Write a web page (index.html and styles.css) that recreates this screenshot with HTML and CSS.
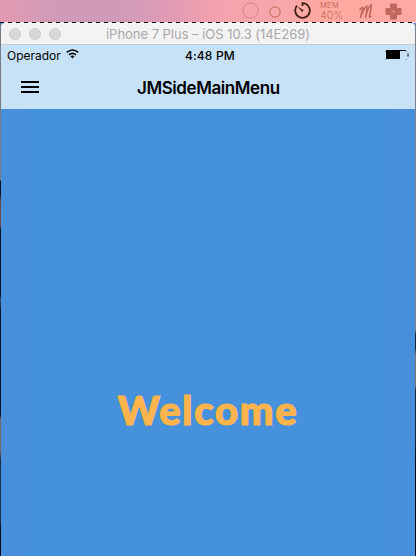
FILE: index.html
```html
<!DOCTYPE html>
<html lang="es">
<head>
<meta charset="utf-8">
<title>JMSideMainMenu</title>
<link rel="stylesheet" href="styles.css">
</head>
<body>
<div class="desktop">
  <div class="menubar">
    <svg class="ring-large" width="17" height="17" viewBox="0 0 17 17"><circle cx="8.5" cy="8.5" r="7.6"/></svg>
    <svg class="ring-small" width="12" height="12" viewBox="0 0 12 12"><circle cx="6" cy="6" r="5.2"/></svg>
    <svg class="timer" width="17" height="17" viewBox="0 0 17 17"><path d="M8.5 4V1.2A7.3 7.3 0 1 1 3 3.7"/><path class="hand" d="M3.8 4.7 9.7 8.2 8.1 10Z"/></svg>
    <div class="memory"><span class="memory-label">MEM</span><span class="memory-value">40%</span></div>
    <svg class="scribble" width="15" height="17" viewBox="0 0 15 17"><path d="M2 6.500Q5 3 5 5L2.500 14.500Q6 5 8.800 3Q9.500 5 7.500 14.500Q10 4 13.300 1.500Q13.500 5 11.300 14L13 13.500"/></svg>
    <svg class="cross" width="17" height="17" viewBox="0 0 17 17"><path d="M5.5 1h6v4.5H16v6h-4.500V16h-6v-4.500H1v-6h4.500Z"/><path class="cross-mark" d="M6.500 8.500h4M8.500 6.500v4"/></svg>
  </div>
  <div class="selection"></div>
  <div class="window">
    <header class="titlebar">
      <div class="lights"><i></i><i></i><i></i></div>
      <span class="window-title">iPhone 7 Plus – iOS 10.3 (14E269)</span>
    </header>
    <div class="statusbar">
      <div class="carrier">
        <span class="carrier-name">Operador</span>
        <svg width="13" height="10" viewBox="0 0 13 10"><path d="M.8 3.400Q6.500-1.300 12.200 3.400M3 5.800Q6.500 2.900 10 5.800"/><path class="wifi-dot" d="M4.500 7.300Q6.500 5.900 8.500 7.300L6.500 9.500Z"/></svg>
      </div>
      <span class="clock">4:48 PM</span>
      <svg class="battery" width="24" height="10" viewBox="0 0 24 10"><path d="M1 0h20v1H15v8H1Z"/><path d="M22.500 3.500h1v3h-1Z"/><path class="corner" d="M0 1h1v1H0ZM0 9h1v1H0ZM21 1h1v1h-1ZM21 9h1v1h-1Z"/></svg>
    </div>
    <nav class="navbar">
      <div class="menu-button"><i></i><i></i><i></i></div>
      <h1 class="nav-title">JMSideMainMenu</h1>
    </nav>
    <main class="content"><p class="welcome">Welcome</p></main>
  </div>
</div>
</body>
</html>
```
FILE: styles.css
```css
* { box-sizing: border-box; }
body { margin: 0; font-family: Inter, "Liberation Sans", sans-serif; color: #000; }
svg { display: block; flex: none; fill: none; }
.desktop {
  width: 416px; height: 556px; overflow: hidden;
  background:
    linear-gradient(#777b84 0 180px, #07162f 181px 194px, #714f4d 202px 225px, #07162f 230px 295px, #294b6a 300px, #08172f 310px 415px, #796761 420px 450px, #17304d 460px 520px, #030b1d 530px) left / 1px 100% no-repeat,
    linear-gradient(#79808c 0 330px, #12203a 335px 348px, #83706e 355px 385px, #172b45 390px 435px, #030a19 460px) right / 1px 100% no-repeat,
    #4690dc;
}
.menubar {
  height: 22px; display: flex; align-items: flex-start; padding: 2px 0 0 242px;
  background: linear-gradient(90deg, #e19ab1 0, #cf9bb8 15%, #d19bb8 30%, #e29bb3 42%, #f4a2ad 52%, #f7a5ae 65%, #ffaa9f 78%, #ffa9a5 100%);
}
.ring-large { stroke: #d87f83; }
.ring-small { stroke: #c77468; margin: 4px 0 0 10px; stroke-width: 1.2; }
.timer { stroke: #431e18; stroke-width: 1.8; margin-left: 13px; }
.timer .hand { fill: #431e18; stroke: none; }
.memory { width: 26px; margin-left: 9px; color: #c56d63; display: flex; flex-direction: column; }
.memory-label { font-size: 7.5px; line-height: 8px; letter-spacing: .3px; }
.memory-value { font-size: 10.5px; line-height: 12px; font-weight: 300; letter-spacing: .1px; }
.scribble { margin: 1px 0 0 12px; stroke: #c1665e; stroke-width: 1.5; stroke-linecap: round; stroke-linejoin: round; }
.cross { margin: 1px 0 0 12px; fill: #c1665e; stroke: #c1665e; stroke-linejoin: round; }
.cross .cross-mark { stroke: #e58b80; }
.selection { height: 1px; background: repeating-linear-gradient(90deg, #000 0 4px, #f8e9e8 4px 8px); }
.window { margin: 0 1px; height: 533px; border-radius: 4px 4px 0 0; overflow: hidden; display: flex; flex-direction: column; }
.titlebar { height: 22px; display: grid; grid-template-columns: 105px 1fr; align-items: center; background: #f4f3f4; border-bottom: 1px solid #c3cbd1; }
.lights { display: flex; gap: 8px; padding-left: 8px; }
.lights i { width: 12px; height: 12px; border-radius: 50%; background: #dad7d8; border: 1px solid #cecbcc; }
.window-title { font-size: 13px; line-height: 18px; color: #aaa8a9; white-space: nowrap; letter-spacing: -.03px; padding-top: 1px; }
.statusbar { height: 21px; background: #c7e1f6; display: grid; grid-template-columns: 184px 1fr 30px; align-items: center; font-size: 12px; }
.carrier { display: flex; align-items: center; gap: 5px; padding-left: 6px; }
.carrier svg { stroke: #000; stroke-width: 1.5; margin-bottom: 3px; }
.carrier .wifi-dot { fill: #000; stroke: none; }
.clock { font-weight: 500; white-space: nowrap; letter-spacing: .15px; }
.battery { fill: #000; margin-bottom: 1px; }
.battery .corner { fill: #748595; }
.navbar { height: 43px; background: #c7e1f6; display: grid; grid-template-columns: 136px 1fr; align-items: center; }
.menu-button { display: flex; flex-direction: column; gap: 3px; width: 18px; margin: 0 0 2px 20px; }
.menu-button i { height: 2px; background: #000; }
.nav-title { margin: 0; font-size: 17px; line-height: 22px; font-weight: 600; white-space: nowrap; letter-spacing: -.42px; }
.content { flex: 1; display: flex; justify-content: center; padding-top: 276px; background: linear-gradient(90deg, #478edb 0 24px, #4591dc 25px 388px, #478edb 389px); }
.welcome { margin: 0; font-family: Lato, sans-serif; font-size: 40px; line-height: 50px; font-weight: 900; letter-spacing: 1.7px; -webkit-text-stroke: 1.2px #feb44d; color: #feb44d; }
```
